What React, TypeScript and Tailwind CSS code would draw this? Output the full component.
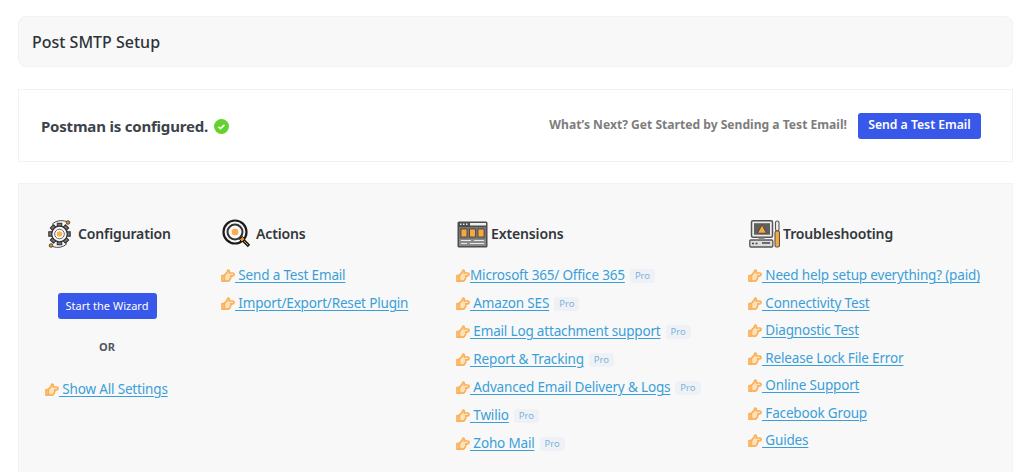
import React from 'react';

function HandIcon() {
  return (
    <svg className="w-[14px] h-[14px] shrink-0 mt-[4px] -ml-[1px]" viewBox="0 0 14 14" fill="#fde2bb" stroke="#fbb05a" strokeWidth="1.700" strokeLinejoin="round">
      <path d="M1 6.600h2.400v5.600H1z" />
      <path d="M3.400 6.400 6 3.400 7 1.200c1.300 0 1.700 1 1.200 2.800h3.600c1.700 0 1.700 2.800-.2 2.800H9.800c.2 1 .1 2-.3 2.600-.1.800-.5 1.300-1 1.700-.3.700-.9 1-1.700 1H5.600c-.9 0-1.500-.4-2.200-.9z" />
    </svg>
  );
}

function ProBadge() {
  return (
    <span className="ml-[5px] px-[5px] h-[14px] leading-[14px] mt-[4px] rounded-[3px] bg-[#eef2f7] text-[#7fb2da] text-[9.500px] shrink-0">Pro</span>
  );
}

function LinkRow({ text, pro, tight }: { text: string; pro?: boolean; tight?: boolean }) {
  return (
    <div className="flex items-start h-[20px] whitespace-nowrap">
      <HandIcon />
      <a href="#" className="text-[#3a9fd9] text-[13.500px] tracking-[-0.17px] leading-[20px] underline underline-offset-2 decoration-1 whitespace-pre">
        {tight ? text : ` ${text}`}
      </a>
      {pro && <ProBadge />}
    </div>
  );
}

const teeth = [0, 45, 90, 135, 180, 225, 270, 315];

function GearIcon() {
  return (
    <svg className="w-[27px] h-[30px] shrink-0" viewBox="0 0 27 30" fill="none">
      <path d="M6 5.500C10 1.500 15 .800 20.500 2.500" stroke="#444" strokeWidth="1" />
      <path d="M21 24.500c-4 4-9 4.700-14.500 3" stroke="#444" strokeWidth="1" />
      <circle cx="22" cy="3.500" r="1.800" fill="#d98a2b" stroke="#333" strokeWidth=".8" />
      <circle cx="5" cy="26.500" r="1.800" fill="#d98a2b" stroke="#333" strokeWidth=".8" />
      {teeth.map((a) => (
        <rect key={a} x="11.300" y="4.300" width="4.400" height="4.400" fill="#777" stroke="#333" strokeWidth="1.100" transform={`rotate(${a} 13.500 15)`} />
      ))}
      <circle cx="13.500" cy="15" r="7.800" fill="#f8f8f8" stroke="#333" strokeWidth="1.300" />
      <circle cx="13.500" cy="15" r="4.800" fill="#fff" stroke="#666" strokeWidth="1" />
      <circle cx="13.500" cy="15" r="2.800" fill="#fdb04d" />
    </svg>
  );
}

function TargetIcon() {
  return (
    <svg className="w-[30px] h-[30px] shrink-0" viewBox="0 0 30 30" fill="none">
      <circle cx="13" cy="13" r="11.500" stroke="#1c1c1c" strokeWidth="2.200" />
      <circle cx="13" cy="13" r="7.500" stroke="#333" strokeWidth="2" />
      <circle cx="13" cy="13" r="3.300" fill="#fcab45" />
      <path d="M19 19l8 8" stroke="#1c1c1c" strokeWidth="3.400" />
      <path d="M17.500 20.500l3-3 2.500 2.500-3 3z" fill="#e8912b" stroke="#1c1c1c" strokeWidth="1" />
      <path d="M22 22l4 4" stroke="#e8912b" strokeWidth="1" />
    </svg>
  );
}

function WindowIcon() {
  return (
    <svg className="w-[31px] h-[27px] shrink-0" viewBox="0 0 31 27" fill="none">
      <rect x=".5" y=".5" width="30" height="26" rx="1.500" fill="#4d4d4d" />
      <rect x="13" y="2" width="16" height="2.500" fill="#efefef" />
      <path d="M3 3.200h1.500M6 3.200h1.500M9 3.200h1.500" stroke="#efefef" strokeWidth="1.500" />
      <rect x="2" y="6" width="27" height="11.500" fill="#777" />
      <rect x="2" y="17.500" width="27" height="7.500" fill="#8a8a8a" />
      <rect x="4" y="8" width="6" height="8" fill="#f7a83e" stroke="#333" strokeWidth=".7" />
      <rect x="12.500" y="8" width="6" height="8" fill="#f7a83e" stroke="#333" strokeWidth=".7" />
      <rect x="21" y="8" width="6" height="8" fill="#f7a83e" stroke="#333" strokeWidth=".7" />
      <path d="M4 19.500h10M17 19.500h10M4 22.500h6M13 22.500h14" stroke="#e8e8e8" strokeWidth="1.200" />
    </svg>
  );
}

function MonitorIcon() {
  return (
    <svg className="w-[31px] h-[28px] shrink-0" viewBox="0 0 31 28" fill="none">
      <rect x="2.500" y=".8" width="21" height="16.500" rx="1.500" fill="#ececec" stroke="#555" strokeWidth="1.500" />
      <rect x="5" y="3.200" width="16" height="11.500" fill="#5f5f5f" />
      <path d="M13 4.800l4.400 8.400H8.600z" fill="#f7a83e" stroke="#3a3a3a" strokeWidth=".7" />
      <rect x=".8" y="20" width="23" height="7" rx="1" fill="#dcdcdc" stroke="#555" strokeWidth="1.300" />
      <path d="M3 23.500h2M6.500 23.500h2M13 23h8" stroke="#444" strokeWidth="1.300" />
      <path d="M9.500 17.500h6V20h-6z" fill="#888" />
      <rect x="26.500" y="1" width="3.500" height="10" rx="1.700" fill="#ececec" stroke="#555" strokeWidth="1.100" />
      <rect x="26" y="11" width="4.500" height="16" rx="1.500" fill="#f7a83e" stroke="#555" strokeWidth="1.100" />
    </svg>
  );
}

function ColumnHeader({ icon, title, gap }: { icon: React.ReactNode; title: string; gap: string }) {
  return (
    <div className={`flex items-center h-[30px] ${gap}`}>
      {icon}
      <span className="text-[14px] font-semibold tracking-[-0.13px] leading-[28px] text-[#32373c]">{title}</span>
    </div>
  );
}

const actions = ['Send a Test Email', 'Import/Export/Reset Plugin'];
const extensions = ['Amazon SES', 'Email Log attachment support', 'Report & Tracking', 'Advanced Email Delivery & Logs', 'Twilio', 'Zoho Mail'];
const troubleshooting = ['Need help setup everything? (paid)', 'Connectivity Test', 'Diagnostic Test', 'Release Lock File Error', 'Online Support', 'Facebook Group', 'Guides'];

export default function App() {
  return (
    <div className="h-[472px] overflow-hidden bg-white pt-4 pl-[18px] pr-[11px] font-['Noto_Sans',sans-serif]">
      <div className="h-[51px] flex items-center px-[13px] bg-[#f8f8f8] border border-[#f2f2f2] rounded-lg">
        <h1 className="text-[16px] font-medium text-[#2c3338]">Post SMTP Setup</h1>
      </div>

      <div className="mt-[22px] h-[73px] flex items-center justify-between pl-[22px] pr-[31px] border border-[#f2f2f2]">
        <div className="flex items-center gap-[6px] mt-[1px]">
          <span className="text-[15px] font-bold tracking-[-0.2px] text-[#3c434a]">Postman is configured.</span>
          <svg className="w-[15px] h-[15px]" viewBox="0 0 15 15">
            <circle cx="7.500" cy="7.500" r="7.500" fill="#63d22f" />
            <path d="M4.500 7.800l2 1.800 4-3.800" fill="none" stroke="#fff" strokeWidth="1.600" />
          </svg>
        </div>
        <div className="flex items-center gap-[11px]">
          <span className="text-[12.100px] font-bold text-[#7d7d7d]">What’s Next? Get Started by Sending a Test Email!</span>
          <button className="w-[123px] h-[26px] rounded-[3px] bg-[#3858e9] text-white text-[12.200px] font-semibold">Send a Test Email</button>
        </div>
      </div>

      <div className="mt-[21px] h-[320px] bg-[#f8f8f8] border border-[#f2f2f2] pt-[35px] pl-[27px] grid grid-cols-[176px_235px_292px_1fr]">
        <div>
          <ColumnHeader icon={<GearIcon />} title="Configuration" gap="gap-[5px]" />
          <div className="w-[122px] flex flex-col items-center">
            <button className="mt-[44px] w-[99px] h-[26px] rounded-[3px] bg-[#3858e9] text-white text-[11px]">Start the Wizard</button>
            <div className="mt-[20px] text-[11px] font-bold text-[#50575e] leading-[15px]">OR</div>
          </div>
          <div className="mt-[25px]">
            <LinkRow text="Show All Settings" />
          </div>
        </div>

        <div>
          <ColumnHeader icon={<TargetIcon />} title="Actions" gap="gap-[4px]" />
          <div className="mt-[16px] flex flex-col gap-[8px]">
            {actions.map((a) => <LinkRow key={a} text={a} />)}
          </div>
        </div>

        <div>
          <ColumnHeader icon={<WindowIcon />} title="Extensions" gap="gap-[3px]" />
          <div className="mt-[16px] flex flex-col gap-[8px]">
            <LinkRow text="Microsoft 365/ Office 365" pro tight />
            {extensions.map((e) => <LinkRow key={e} text={e} pro />)}
          </div>
        </div>

        <div>
          <ColumnHeader icon={<MonitorIcon />} title="Troubleshooting" gap="gap-[3px]" />
          <div className="mt-[16px] flex flex-col gap-[7.500px]">
            {troubleshooting.map((t) => <LinkRow key={t} text={t} />)}
          </div>
        </div>
      </div>
    </div>
  );
}
